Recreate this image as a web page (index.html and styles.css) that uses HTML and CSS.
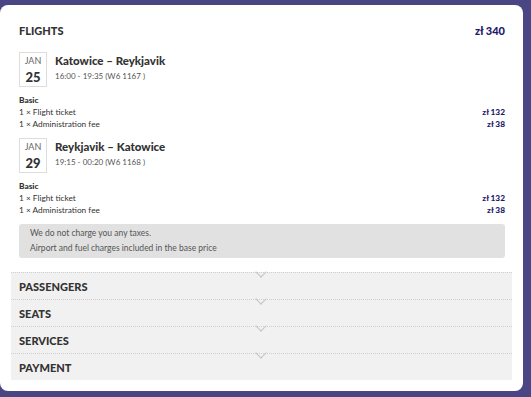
FILE: index.html
```html
<!DOCTYPE html>
<html lang="en">
<head>
    <meta charset="UTF-8">
    <title>Summary</title>
    <link rel="stylesheet" href="styles.css">
</head>
<body>
    <div class="card">
        <div class="head">
            <h2>FLIGHTS</h2>
            <span class="total">zł 340</span>
        </div>

        <div class="flight">
            <div class="date">
                <span class="mon">JAN</span>
                <span class="day">25</span>
            </div>
            <div class="route">
                <h3>Katowice – Reykjavik</h3>
                <p>16:00 - 19:35 (W6 1167 )</p>
            </div>
        </div>
        <div class="fare">
            <b>Basic</b>
            <div class="line"><span>1 × Flight ticket</span><span class="price">zł 132</span></div>
            <div class="line"><span>1 × Administration fee</span><span class="price">zł 38</span></div>
        </div>

        <div class="flight">
            <div class="date">
                <span class="mon">JAN</span>
                <span class="day">29</span>
            </div>
            <div class="route">
                <h3>Reykjavik – Katowice</h3>
                <p>19:15 - 00:20 (W6 1168 )</p>
            </div>
        </div>
        <div class="fare">
            <b>Basic</b>
            <div class="line"><span>1 × Flight ticket</span><span class="price">zł 132</span></div>
            <div class="line"><span>1 × Administration fee</span><span class="price">zł 38</span></div>
        </div>

        <div class="note">
            <p>We do not charge you any taxes.</p>
            <p>Airport and fuel charges included in the base price</p>
        </div>

        <div class="steps">
            <div class="step">PASSENGERS</div>
            <div class="step">SEATS</div>
            <div class="step">SERVICES</div>
            <div class="step">PAYMENT</div>
        </div>
    </div>
</body>
</html>
```

FILE: styles.css
```css
body{
    margin: 0;
    padding: 5px 8px 6px 0;
    background: #4a4683;
    font-family: Lato, "Noto Sans", sans-serif;
    color: #333;
}
.card{
    height: 386px;
    box-sizing: border-box;
    background: #fff;
    border-radius: 8px;
    padding: 18px 18px 0 19px;
}
.head{
    display: flex;
    justify-content: space-between;
    align-items: center;
    height: 14px;
}
h2{
    margin: 0;
    font-size: 11px;
    font-weight: 900;
    color: #333;
}
.total{
    font-size: 11px;
    font-weight: 900;
    color: #1d1a6b;
}
/* flight row */
.flight{
    display: flex;
    margin-top: 8px;
}
.head + .flight{
    margin-top: 15px;
}
.date{
    width: 26px;
    height: 33px;
    border: 1px solid #ddd;
    display: flex;
    flex-direction: column;
    align-items: center;
}
.mon{
    font-size: 9px;
    color: #666;
    margin-top: 2px;
    line-height: 11px;
}
.day{
    font-size: 13px;
    font-weight: 900;
    margin-top: 4px;
    line-height: 14px;
}
.route{
    margin-left: 8px;
}
h3{
    margin: 1px 0 0;
    font-size: 11.5px;
    font-weight: 900;
    line-height: 15px;
}
.route p{
    margin: 2px 0 0;
    font-size: 8px;
    color: #555;
    line-height: 12px;
}
/* fare lines */
.fare{
    margin-top: 7px;
    font-size: 8.3px;
    line-height: 12px;
}
.fare b{
    display: block;
    font-weight: 900;
}
.line{
    display: flex;
    justify-content: space-between;
}
.price{
    font-weight: 900;
    color: #1d1a6b;
}
.note{
    margin-top: 8px;
    background: #e1e1e1;
    border-radius: 3px;
    padding: 2px 11px;
    font-size: 8.5px;
    color: #555;
}
.note p{
    margin: 0;
    line-height: 15px;
}
/* collapsed steps */
.steps{
    margin: 14px -7px 0 -8px;
    background: #f1f1f1;
}
.step{
    position: relative;
    height: 27px;
    border-top: 1px dotted #cfcfcf;
    box-sizing: border-box;
    padding-left: 8px;
    display: flex;
    align-items: center;
    font-size: 11px;
    font-weight: 900;
    color: #333;
}
.step::after{
    content: "";
    position: absolute;
    top: -5px;
    left: 246px;
    width: 7px;
    height: 7px;
    border-right: 1px solid #c4c4c4;
    border-bottom: 1px solid #c4c4c4;
    transform: rotate(45deg);
}
```
